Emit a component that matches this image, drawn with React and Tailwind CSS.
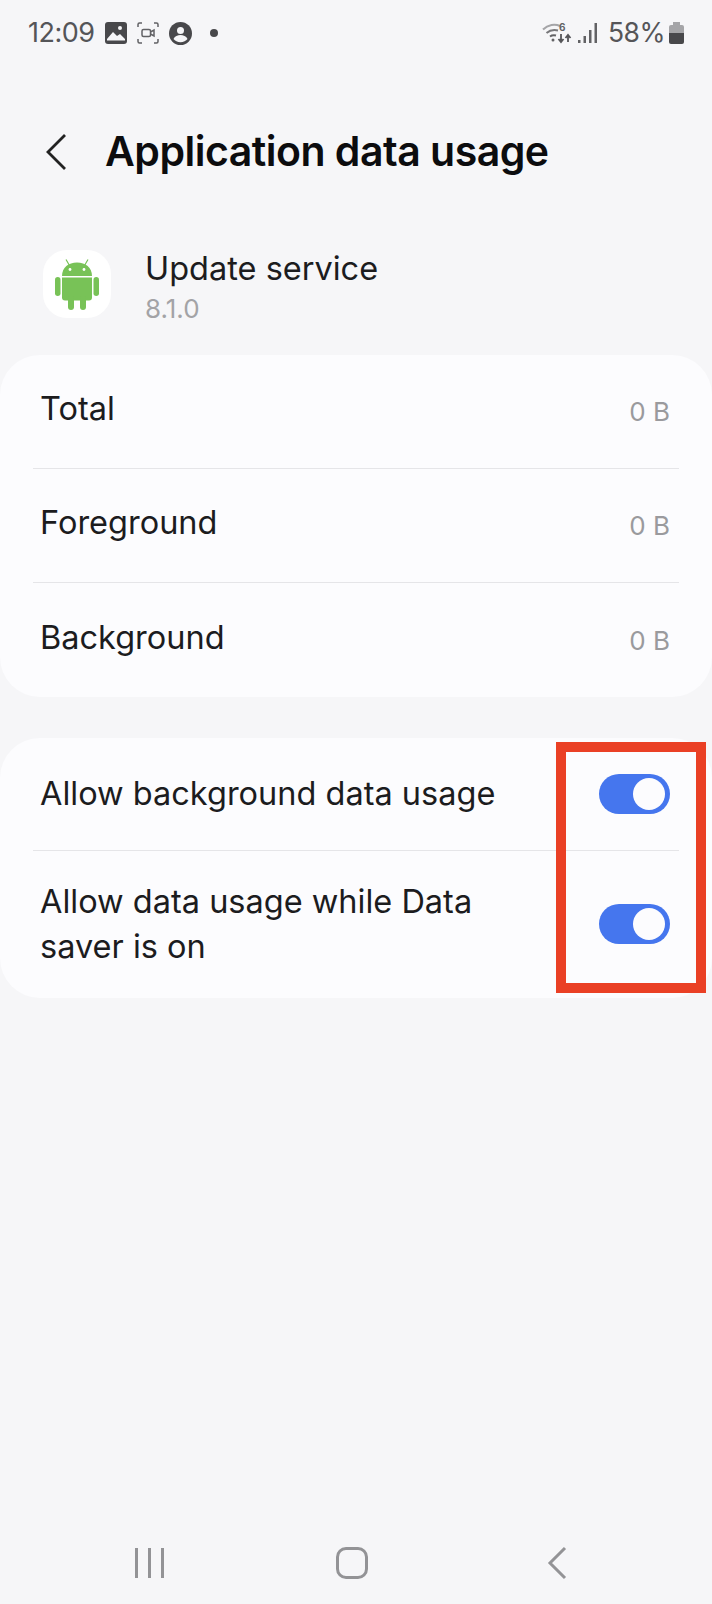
const font = { fontFamily: 'Inter, "Noto Sans", sans-serif' };

function AndroidIcon() {
  return (
    <svg width="44" height="52" viewBox="0 0 44 52" fill="#78c257">
      <path d="M11 1.5l3.5 6M33 1.5l-3.500 6" stroke="#78c257" strokeWidth="1.200" fill="none" />
      <path d="M7 18C7 9.500 13.500 4.500 22 4.500S37 9.500 37 18z" />
      <circle cx="15" cy="11.500" r="1.400" fill="#fff" />
      <circle cx="29" cy="11.500" r="1.400" fill="#fff" />
      <path d="M7 19.500h30v20a3 3 0 0 1-3 3H10a3 3 0 0 1-3-3z" />
      <rect x="0" y="19" width="5.500" height="19" rx="2.750" />
      <rect x="38.500" y="19" width="5.500" height="19" rx="2.750" />
      <rect x="13" y="38" width="6" height="14" rx="3" />
      <rect x="25" y="38" width="6" height="14" rx="3" />
    </svg>
  );
}

function StatusLeft() {
  return (
    <div className="flex items-center">
      <span className="text-[27px] tracking-[-0.5px] text-[#555558] w-[77px]">12:09</span>
      <svg width="22" height="22" viewBox="0 0 22 22">
        <rect width="22" height="22" rx="3" fill="#48484b" />
        <circle cx="15" cy="6" r="2" fill="#f6f6f8" />
        <path d="M2 17l6-7 4 4 3-2 5 5v1.500H2z" fill="#f6f6f8" />
      </svg>
      <svg className="ml-[10px]" width="22" height="22" viewBox="0 0 22 22" fill="none" stroke="#626265" strokeWidth="1.500">
        <path d="M1 5V2.500A1.500 1.500 0 0 1 2.500 1H5M17 1h2.500A1.500 1.500 0 0 1 21 2.500V5M21 17v2.500a1.500 1.500 0 0 1-1.500 1.500H17M5 21H2.500A1.500 1.500 0 0 1 1 19.500V17" />
        <rect x="5" y="7.500" width="8.500" height="7" rx="1.500" />
        <path d="M13.500 10l3.500-2v6l-3.500-2" />
      </svg>
      <svg className="ml-[10px]" width="23" height="23" viewBox="0 0 23 23">
        <circle cx="11.500" cy="11.500" r="11.500" fill="#48484b" />
        <circle cx="11.500" cy="8.500" r="3.500" fill="#f6f6f8" />
        <path d="M4.500 17c1.500-3 4-4 7-4s5.500 1 7 4c-1.500 2-4 3.200-7 3.200s-5.500-1.200-7-3.200z" fill="#f6f6f8" />
      </svg>
      <span className="ml-[18px] w-[8px] h-[8px] rounded-full bg-[#48484b]" />
    </div>
  );
}

function StatusRight() {
  return (
    <div className="flex items-center">
      <svg width="30" height="22" viewBox="0 0 30 22" fill="none">
        <path d="M1 7.500C6 2.500 13 1.500 18 4" stroke="#a5a5a8" strokeWidth="2" />
        <path d="M4.500 11C8 8 12 7.500 16 8.500" stroke="#77777a" strokeWidth="2" />
        <path d="M8 14.500c2-1.500 4-1.500 6-1" stroke="#626265" strokeWidth="2" />
        <circle cx="11" cy="18" r="1.500" fill="#626265" />
        <text x="17" y="9" fontSize="10" fontWeight="700" fill="#626265" fontFamily="Inter, sans-serif">6</text>
        <path d="M19 12v8m-2.500-3l2.500 3 2.500-3M26 20v-7m-2.500 3l2.500-3 2.500 3" stroke="#555558" strokeWidth="1.800" />
      </svg>
      <svg className="ml-[6px]" width="20" height="21" viewBox="0 0 20 21" fill="#626265">
        <rect x="0" y="17" width="2.500" height="3" />
        <rect x="5.500" y="13" width="2.500" height="7" />
        <rect x="11" y="7" width="2.500" height="13" />
        <rect x="16.500" y="0" width="2.500" height="20" />
      </svg>
      <span className="ml-[10px] text-[26.500px] tracking-[-0.5px] text-[#555558]">58%</span>
      <div className="ml-[4px] flex flex-col items-center">
        <div className="w-[7px] h-[3px] bg-[#a5a5a8]" />
        <div className="w-[15px] h-[19px] rounded-[2px] overflow-hidden flex flex-col">
          <div className="h-[8px] bg-[#a5a5a8]" />
          <div className="flex-1 bg-[#48484b]" />
        </div>
      </div>
    </div>
  );
}

function UsageRow({ label, value }) {
  return (
    <div className="mx-[33px] h-[114px] flex items-center justify-between border-b-[1.5px] last:border-b-0 border-[#e5e5e8] pl-[7px] pr-[9px]">
      <span className="text-[32.500px] text-[#1c1c1e] mb-[4px]">{label}</span>
      <span className="text-[26px] text-[#9a9a9d]">{value}</span>
    </div>
  );
}

function Toggle() {
  return (
    <div className="w-[71px] h-[40px] rounded-full bg-[#4576ee] flex items-center justify-end pr-[5px] shrink-0">
      <div className="w-[32px] h-[32px] rounded-full bg-[#fcfcfe]" />
    </div>
  );
}

export default function App() {
  return (
    <div className="relative w-[712px] h-[1604px] bg-[#f6f6f8] flex flex-col overflow-hidden" style={font}>
      {/* Status bar */}
      <div className="h-[66px] pl-[28px] pr-[28px] flex items-center justify-between">
        <StatusLeft />
        <StatusRight />
      </div>

      {/* Header */}
      <div className="mt-[60px] h-[52px] pl-[45px] flex items-center">
        <svg width="22" height="38" viewBox="0 0 22 38" fill="none" stroke="#222" strokeWidth="2.800">
          <path d="M20 2L3 19l17 17" />
        </svg>
        <h1 className="ml-[38px] text-[41px] font-semibold tracking-[-0.5px] text-[#0c0c0e]">Application data usage</h1>
      </div>

      {/* App info */}
      <div className="mt-[72px] pl-[43px] flex items-start">
        <div className="w-[68px] h-[68px] rounded-[24px] bg-white flex items-center justify-center">
          <AndroidIcon />
        </div>
        <div className="ml-[34px] -mt-[1px] flex flex-col">
          <span className="text-[32.500px] leading-[40px] text-[#1c1c1e]">Update service</span>
          <span className="text-[26px] leading-[40px] text-[#a3a3a6]">8.1.0</span>
        </div>
      </div>

      {/* Usage card */}
      <div className="mt-[26px] h-[342px] rounded-[40px] bg-[#fcfcfe] flex flex-col">
        <UsageRow label="Total" value="0 B" />
        <UsageRow label="Foreground" value="0 B" />
        <UsageRow label="Background" value="0 B" />
      </div>

      {/* Toggles card */}
      <div className="mt-[41px] h-[260px] rounded-[40px] bg-[#fcfcfe] flex flex-col">
        <div className="mx-[33px] h-[113px] pl-[7px] pr-[9px] flex items-center justify-between border-b-[1.5px] border-[#e5e5e8]">
          <span className="text-[32.500px] text-[#1c1c1e]">Allow background data usage</span>
          <Toggle />
        </div>
        <div className="mx-[33px] flex-1 pl-[7px] pr-[9px] pb-[2px] flex items-center justify-between">
          <span className="text-[32.500px] leading-[45px] text-[#1c1c1e] w-[490px]">Allow data usage while Data saver is on</span>
          <Toggle />
        </div>
      </div>

      {/* Highlight box */}
      <div className="absolute left-[556px] top-[742px] w-[150px] h-[251px] border-[10px] border-[#ea4025]" />

      {/* Nav bar */}
      <div className="mt-auto h-[56px] mb-[13px] flex items-center">
        <div className="ml-[135px] flex gap-[10px]">
          <div className="w-[3px] h-[30px] bg-[#939396]" />
          <div className="w-[3px] h-[30px] bg-[#939396]" />
          <div className="w-[3px] h-[30px] bg-[#939396]" />
        </div>
        <div className="ml-[172px] w-[32px] h-[32px] rounded-[10px] border-[3px] border-[#939396]" />
        <svg className="ml-[179px]" width="20" height="34" viewBox="0 0 20 34" fill="none" stroke="#939396" strokeWidth="3">
          <path d="M18 2L3 17l15 15" />
        </svg>
      </div>
    </div>
  );
}
